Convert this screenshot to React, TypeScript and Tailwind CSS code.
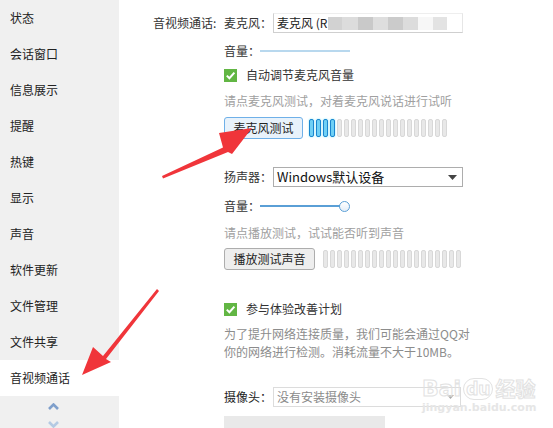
import React from "react";

const FONT = { fontFamily: '"Noto Sans CJK SC", "Microsoft YaHei", sans-serif' };

const navItems = ["状态", "会话窗口", "信息展示", "提醒", "热键", "显示", "声音", "软件更新", "文件管理", "文件共享", "音视频通话"];

function Check() {
  return (
    <div className="w-[13px] h-[13px] bg-[#62b644] flex items-center justify-center shrink-0">
      <svg width="11" height="11" viewBox="0 0 11 11">
        <path d="M1.8 5.6 L4.4 8.2 L9.4 2.6" fill="none" stroke="#fff" strokeWidth="2" />
      </svg>
    </div>
  );
}

function Meter({ active, ml }: { active: number; ml: string }) {
  const bars = Array.from({ length: 20 }, (_, i) => i);
  return (
    <div className={`flex gap-[2px] ${ml}`}>
      {bars.map((i) =>
        i < active ? (
          <div key={i} className="w-[5px] h-[18px] rounded-[2px] border border-[#1a86cf] bg-[#6fd0f5] shadow-[0_0_2px_#7fe3f7]" />
        ) : (
          <div key={i} className="w-[5px] h-[18px] rounded-[2px] border border-[#d8d8d8] bg-[#e8e8e8]" />
        )
      )}
    </div>
  );
}

export default function App() {
  return (
    <div className="relative w-[553px] h-[428px] flex overflow-hidden bg-white text-[12px] text-[#333]" style={FONT}>
      {/* Sidebar */}
      <div className="w-[119px] h-full bg-[#f0f0f0] flex flex-col shrink-0">
        {navItems.map((t, i) => (
          <div
            key={t}
            className={`h-[36px] shrink-0 flex items-center pl-[10px] text-[12px] text-[#222] ${i === navItems.length - 1 ? "bg-white" : ""}`}
          >
            {t}
          </div>
        ))}
        <div className="flex flex-col items-center pr-[13px] pt-[7px] gap-[11px]">
          <svg width="11" height="7" viewBox="0 0 11 7">
            <path d="M1 6 L5.5 1.5 L10 6" fill="none" stroke="#7f9fcb" strokeWidth="2.6" />
          </svg>
          <svg width="11" height="7" viewBox="0 0 11 7">
            <path d="M1 1 L5.5 5.5 L10 1" fill="none" stroke="#b4cae3" strokeWidth="2.6" />
          </svg>
        </div>
      </div>

      {/* Main */}
      <div className="flex-1 flex pl-[34px]">
        <div className="w-[71px] shrink-0 pt-[13px]">
          <div className="h-[20px] flex items-center">音视频通话:</div>
        </div>
        <div className="flex flex-col">
          {/* mic row */}
          <div className="mt-[13px] h-[20px] flex items-center">
            <span className="w-[49px]">麦克风：</span>
            <div className="relative w-[190px] h-[20px] border border-[#cfcfcf] border-r-[#e6e6e6] border-t-[#eeeeee] flex items-center pl-[3px] overflow-hidden">
              <span className="text-[#222]">麦克风 (R</span>
              <div className="flex h-[13px] ml-[1px]">
                <div className="w-[14px] bg-[#d2d2d2]" />
                <div className="w-[16px] bg-[#dcdcdc]" />
                <div className="w-[15px] bg-[#c9c9c9]" />
                <div className="w-[15px] bg-[#dedede]" />
                <div className="w-[15px] bg-[#cbcbcb]" />
                <div className="w-[15px] bg-[#dcdcdc]" />
                <div className="w-[15px] bg-[#f7f7f7]" />
                <div className="w-[14px] bg-[#e3e3e3]" />
              </div>
            </div>
          </div>
          {/* volume */}
          <div className="mt-[9px] h-[18px] flex items-center">
            <span className="w-[36px]">音量：</span>
            <div className="w-[90px] h-[2px] bg-[#b8d8ee]" />
          </div>
          {/* auto adjust */}
          <div className="mt-[6px] h-[18px] flex items-center">
            <Check />
            <span className="ml-[9px]">自动调节麦克风音量</span>
          </div>
          <div className="mt-[8px] h-[18px] flex items-center text-[#a0a0a0]">请点麦克风测试，对着麦克风说话进行试听</div>
          <div className="mt-[7px] h-[22px] flex items-center">
            <div className="w-[79px] h-[22px] rounded-[3px] border border-[#6fb0e8] bg-[#e8f2fb] flex items-center justify-center text-[#222]">
              麦克风测试
            </div>
            <Meter active={4} ml="ml-[6px]" />
          </div>
          {/* speaker */}
          <div className="mt-[28px] h-[20px] flex items-center">
            <span className="w-[49px]">扬声器：</span>
            <div className="w-[190px] h-[20px] border border-[#adadad] flex items-center justify-between pl-[3px] pr-[5px] text-[#111]">
              <span className="text-[13px]">Windows默认设备</span>
              <svg width="9" height="5" viewBox="0 0 9 5">
                <path d="M0 0 L9 0 L4.5 5 Z" fill="#444" />
              </svg>
            </div>
          </div>
          <div className="mt-[10px] h-[18px] flex items-center">
            <span className="w-[36px]">音量：</span>
            <div className="w-[80px] h-[2px] bg-[#5a9fd6]" />
            <div className="w-[11px] h-[11px] rounded-full border border-[#5a9fd6] bg-gradient-to-b from-white to-[#e4eef8] -ml-[1px]" />
          </div>
          <div className="mt-[9px] h-[18px] flex items-center text-[#a0a0a0]">请点播放测试，试试能否听到声音</div>
          <div className="mt-[6px] h-[22px] flex items-center">
            <div className="w-[91px] h-[22px] rounded-[3px] border border-[#adadad] bg-[#eeeeee] flex items-center justify-center text-[#222]">
              播放测试声音
            </div>
            <Meter active={0} ml="ml-[8px]" />
          </div>
          {/* improvement plan */}
          <div className="mt-[30px] h-[18px] flex items-center">
            <Check />
            <span className="ml-[9px]">参与体验改善计划</span>
          </div>
          <div className="mt-[7px] leading-[18px] text-[#8c8c8c]">
            <div>为了提升网络连接质量，我们可能会通过QQ对</div>
            <div>你的网络进行检测。消耗流量不大于10MB。</div>
          </div>
          {/* camera */}
          <div className="mt-[26px] h-[20px] flex items-center">
            <span className="w-[49px] text-[#222]">摄像头：</span>
            <div className="w-[188px] h-[20px] border border-[#dcdcdc] flex items-center justify-between pl-[3px] pr-[6px] text-[#8a8a8a]">
              <span>没有安装摄像头</span>
              <svg width="7" height="4" viewBox="0 0 7 4">
                <path d="M0 0 L7 0 L3.5 4 Z" fill="#aaa" />
              </svg>
            </div>
          </div>
          <div className="mt-[9px] w-[161px] h-[14px] bg-[#e9e9e9]" />
        </div>
      </div>

      {/* Baidu watermark */}
      <div className="absolute left-[422px] top-[377px] flex flex-col pointer-events-none" style={{ fontFamily: '"DejaVu Sans", sans-serif' }}>
        <div className="flex items-center gap-[2px] text-[22px] leading-[24px] font-bold text-transparent" style={{ WebkitTextStroke: "1px #e2e2e2" }}>
          <span>Bai</span>
          <span className="rounded-full border border-[#e2e2e2] px-[2px] text-[17px] leading-[20px]">du</span>
          <span className="text-[20px]" style={{ fontFamily: '"Noto Sans CJK SC", sans-serif' }}>经验</span>
        </div>
        <div className="text-[11px] leading-[13px] text-[#e6e6e6] font-bold">jingyan.baidu.com</div>
      </div>

      {/* Red arrows */}
      <svg className="absolute left-0 top-0 pointer-events-none" width="553" height="428">
        <polygon points="162,176 223,147.5 219,133 252,128 232,154 228,152 163,178.5" fill="#f0353a" />
        <polygon points="157,289 103,356 93,347 82,375 111,362 106,359 159,291" fill="#f0353a" />
      </svg>
    </div>
  );
}
